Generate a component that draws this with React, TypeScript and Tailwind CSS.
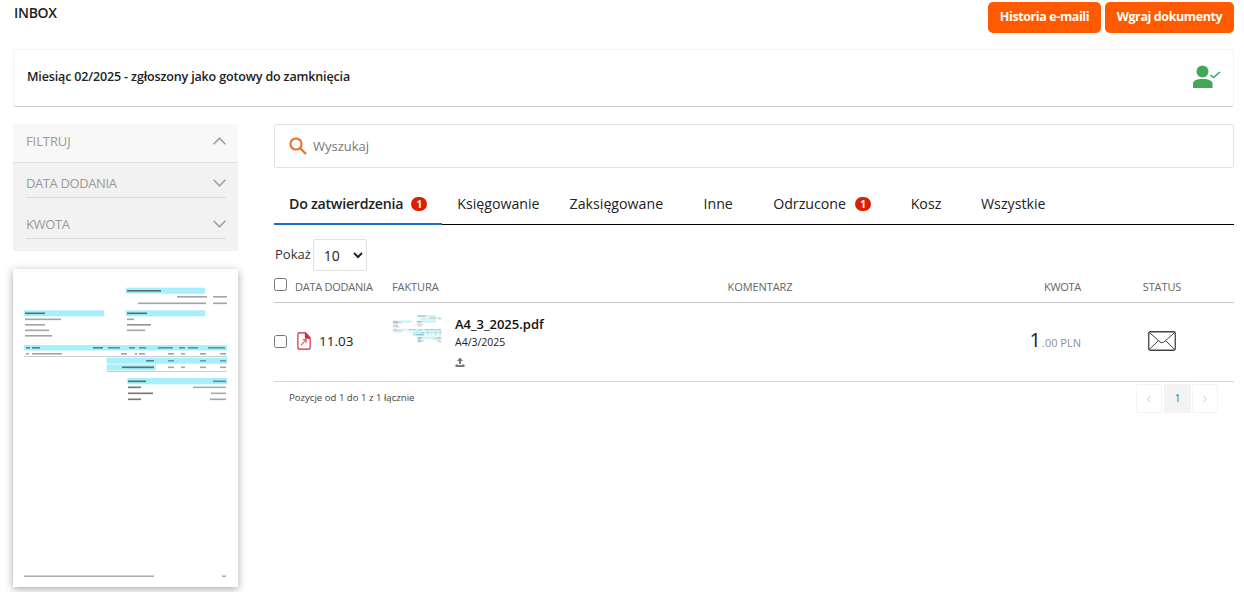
import React from "react";
import { ChevronLeft, ChevronRight } from "lucide-react";

const cyan = "#a5f0fc";

function DocPicture({ id, blur, fade }: { id: string; blur: number; fade: number }) {
  const bars = [
    [112.7, 18.7, 79.3, 6],
    [11, 41.3, 80, 6],
    [112.7, 41.3, 79.3, 6],
    [11, 76, 203, 5.5],
    [93.7, 88.7, 120.5, 6],
    [93.7, 95.5, 49, 6],
    [114.3, 109, 99.7, 6.3],
  ];
  const lines: number[][] = [
    [114, 21, 34, 1.6, 0.9], [164, 27, 30, 1.6, 0.6], [200, 27, 14, 1.6, 0.6], [125, 33.5, 68, 1.6, 0.6], [200, 33.5, 14, 1.6, 0.6],
    [12, 43.5, 20, 1.6, 0.9], [114, 43.5, 20, 1.6, 0.9], [12, 49.5, 36, 1.6, 0.6], [12, 55, 20, 1.6, 0.6], [12, 60.5, 24, 1.6, 0.6], [12, 66, 27, 1.6, 0.6],
    [114, 49.5, 7, 1.6, 0.6], [114, 55, 24, 1.6, 0.7], [114, 60.5, 18, 1.6, 0.6],
    [13, 78, 4, 1.6, 0.8], [19, 78, 8, 1.6, 0.8], [80, 78, 10, 1.6, 0.8], [95, 78, 12, 1.6, 0.7], [116, 78, 6, 1.6, 0.7], [126, 78, 7, 1.6, 0.7], [145, 78, 15, 1.6, 0.7], [166, 78, 6, 1.6, 0.7], [175, 78, 10, 1.6, 0.7], [195, 78, 17, 1.6, 0.7],
    [13, 84, 3, 1.6, 0.6], [19, 84, 30, 1.6, 0.6], [108, 84, 6, 1.6, 0.6], [122, 84, 2, 1.6, 0.7], [126, 84, 6, 1.6, 0.6], [155, 84, 6, 1.6, 0.6], [168, 84, 4, 1.6, 0.6], [187, 84, 6, 1.6, 0.6], [207, 84, 6, 1.6, 0.6],
    [133, 91, 8, 1.6, 0.8], [155, 91, 6, 1.6, 0.6], [187, 91, 6, 1.6, 0.6], [207, 91, 6, 1.6, 0.6],
    [109, 97.5, 32, 1.6, 0.9], [155, 97.5, 6, 1.6, 0.6], [168, 97.5, 4, 1.6, 0.6], [187, 97.5, 6, 1.6, 0.6], [207, 97.5, 6, 1.6, 0.6],
    [115, 111.5, 18, 1.6, 0.9], [200, 111.5, 13, 1.6, 0.7], [115, 117.5, 13, 1.6, 0.9], [180, 117.5, 33, 1.6, 0.55], [115, 123.5, 25, 1.6, 0.9], [198, 123.5, 15, 1.6, 0.55], [115, 129.5, 13, 1.6, 0.9], [197, 129.5, 16, 1.6, 0.6],
    [11, 306.5, 130, 1.4, 0.6], [209, 306.5, 4, 1.4, 0.6],
  ];
  return (
    <svg viewBox="0 0 225 318" className="block w-full h-full">
      <defs>
        <filter id={id} x="-5%" y="-5%" width="110%" height="110%">
          <feGaussianBlur stdDeviation={blur} />
        </filter>
      </defs>
      <g filter={`url(#${id})`}>
        {bars.map((b, i) => (
          <rect key={i} x={b[0]} y={b[1]} width={b[2]} height={b[3]} fill={cyan} />
        ))}
        <rect x="11" y="87" width="203" height="1" fill="#ccc" />
        <rect x="93.7" y="102" width="120" height="1" fill="#ccc" />
        {lines.map((l, i) => (
          <rect key={i} x={l[0]} y={l[1]} width={l[2]} height={l[3]} fill="#333" opacity={l[4] * fade} />
        ))}
      </g>
    </svg>
  );
}

function Chevron({ up }: { up?: boolean }) {
  return (
    <svg width="13" height="8" viewBox="0 0 13 8" aria-hidden="true" className="mt-[5px] shrink-0">
      <path d={up ? "M0.6 7.3 L6.5 1.2 L12.4 7.3" : "M0.6 0.7 L6.5 6.8 L12.4 0.7"} fill="none" stroke="#a0a0a0" strokeWidth="1.6" />
    </svg>
  );
}

function Badge({ gap }: { gap: string }) {
  return (
    <span className={`${gap} inline-flex h-[14px] w-[16px] items-center justify-center rounded-full bg-[#dc1f00] text-[10px] font-bold leading-none text-white`}>
      1
    </span>
  );
}

function Tab({ label, badge, active }: { label: string; badge?: boolean; active?: boolean }) {
  return (
    <div
      className={`flex h-[41px] min-w-[80px] items-center justify-center px-[15px] text-[14.2px] text-[#222] ${
        active ? "border-b-[2px] border-[#1a6fc4] font-semibold tracking-[-0.25px]" : "pb-[2px]"
      }`}
    >
      <span>{label}</span>
      {badge && <Badge gap={active ? "ml-[8px]" : "ml-[9px]"} />}
    </div>
  );
}

function FilterRow({ label, mt }: { label: string; mt: string }) {
  return (
    <div className={`ml-[13px] mr-[12px] flex h-[24px] items-start justify-between border-b border-[#dcdcdc] ${mt}`}>
      <span className="text-[13px] leading-[18px] tracking-[-0.4px] text-[#9a9a9a]">{label}</span>
      <Chevron />
    </div>
  );
}

const gridCols = "grid grid-cols-[21px_97px_250px_236px_212px_144px]";

export default function App() {
  return (
    <div className="h-[592px] overflow-hidden bg-white pl-[13px] pr-[10px] font-['Open_Sans',sans-serif] text-[#222]">
      <header className="flex h-[49px] items-start justify-between">
        <h1 className="pl-[1px] pt-[4px] text-[14px] font-semibold leading-[18px] tracking-[-0.3px] text-[#222]">INBOX</h1>
        <div className="mt-[2px] flex gap-[4px]">
          <button className="h-[31px] w-[113px] rounded-[5px] bg-[#ff5a00] text-[12.5px] font-bold tracking-[-0.4px] text-white">Historia e-maili</button>
          <button className="h-[31px] w-[129px] rounded-[5px] bg-[#ff5a00] text-[12.5px] font-bold tracking-[-0.4px] text-white">Wgraj dokumenty</button>
        </div>
      </header>

      <section className="flex h-[58px] items-center justify-between rounded-[3px] border border-[#f4f4f4] border-b-[#c8c8c8] pb-[2px] pl-[13px] pr-[12px]">
        <span className="text-[12.5px] font-semibold tracking-[-0.15px]">Miesiąc 02/2025 - zgłoszony jako gotowy do zamknięcia</span>
        <svg width="28" height="24" viewBox="0 0 28 24" aria-hidden="true">
          <circle cx="9.5" cy="6.5" r="6" fill="#43a855" />
          <path d="M0 23 V19 C0 15.5 3 14 9.5 14 C16 14 19.5 15.5 19.5 19 V23 Z" fill="#43a855" />
          <path d="M17.5 10 L20.5 12.5 L27 7" fill="none" stroke="#2fa56c" strokeWidth="1.6" />
        </svg>
      </section>

      <div className="mt-[17px] flex items-start">
        <aside className="w-[225px] shrink-0">
          <div className="h-[127px] bg-[#f2f2f2]">
            <div className="flex h-[39px] items-start justify-between border-b border-[#e0e0e0] bg-[#f8f8f8] pl-[13px] pr-[12px] pt-[8px]">
              <span className="text-[13px] leading-[18px] tracking-[-0.1px] text-[#9a9a9a]">FILTRUJ</span>
              <Chevron up />
            </div>
            <FilterRow label="DATA DODANIA" mt="mt-[11px]" />
            <FilterRow label="KWOTA" mt="mt-[17px]" />
          </div>
          <div className="mt-[18px] h-[318px] bg-white shadow-[0_2px_8px_rgba(0,0,0,0.35)]">
            <DocPicture id="doc-large" blur={0.7} fade={0.75} />
          </div>
        </aside>

        <main className="ml-[36px] min-w-0 flex-1">
          <div className="flex h-[44px] items-center rounded-[2px] border border-[#e2e2e2] pl-[14px]">
            <svg width="18" height="18" viewBox="0 0 18 18" aria-hidden="true">
              <circle cx="7" cy="7" r="5.6" fill="none" stroke="#f26a21" strokeWidth="2" />
              <path d="M11 11 L17 17" stroke="#f26a21" strokeWidth="2.2" />
            </svg>
            <span className="ml-[6px] pt-[1px] text-[13px] text-[#777]">Wyszukaj</span>
          </div>

          <nav className="mt-[16px] flex h-[41px] border-b border-black">
            <Tab label="Do zatwierdzenia" badge active />
            <Tab label="Księgowanie" />
            <Tab label="Zaksięgowane" />
            <Tab label="Inne" />
            <Tab label="Odrzucone" badge />
            <Tab label="Kosz" />
            <Tab label="Wszystkie" />
          </nav>

          <div className="mt-[14px] flex h-[32px] items-center">
            <span className="ml-[1px] text-[13px] text-[#333]">Pokaż</span>
            <select className="ml-[2px] h-[32px] w-[54px] rounded-[2px] border border-[#e0e0e0] bg-white pl-[6px] text-[14px] text-[#222]" defaultValue="10">
              <option value="10">10</option>
            </select>
          </div>

          <div className={`${gridCols} h-[32px] items-center border-b border-[#c9c9c9] text-[11px] text-[#666]`}>
            <input type="checkbox" className="-mt-[5px] m-0 h-[13px] w-[13px]" />
            <span className="pt-[2px] tracking-[-0.25px]">DATA DODANIA</span>
            <span className="pt-[2px] tracking-[-0.1px]">FAKTURA</span>
            <span className="pt-[2px] text-center tracking-[-0.1px]">KOMENTARZ</span>
            <span className="pt-[2px] pr-[9px] text-right tracking-[-0.3px]">KWOTA</span>
            <span className="pt-[2px] text-center tracking-[-0.1px]">STATUS</span>
          </div>

          <div className={`${gridCols} h-[79px] items-center border-b border-[#d6d6d6]`}>
            <input type="checkbox" className="-mt-[2px] m-0 h-[13px] w-[13px]" />
            <div className="-mt-[2px] flex items-center gap-[8px] pl-[2px]">
              <svg width="14" height="18" viewBox="0 0 16 19" preserveAspectRatio="none" aria-hidden="true">
                <path d="M1 2 C1 1.3 1.5 1 2 1 H10 L15 6 V17 C15 17.6 14.5 18 14 18 H2 C1.4 18 1 17.6 1 17 Z" fill="none" stroke="#d3223c" strokeWidth="1.3" />
                <path d="M9.5 1 V6.5 H15" fill="#d3223c" stroke="#d3223c" strokeWidth="1" />
                <path d="M4.5 14 L10.5 8 M6.5 8 H10.5 V12" fill="none" stroke="#e0566c" strokeWidth="1.2" />
              </svg>
              <span className="text-[13.5px] text-[#222]">11.03</span>
            </div>
            <div className="flex h-[78px] items-start overflow-hidden">
              <div className="-ml-[2px] mt-[8px] h-[76px] w-[54px] shrink-0">
                <DocPicture id="doc-small" blur={0.7} fade={1} />
              </div>
              <div className="ml-[11px] pt-[14px]">
                <div className="text-[13px] font-semibold leading-[15px] text-[#111]">A4_3_2025.pdf</div>
                <div className="mt-[3px] text-[10.5px] leading-[14px] text-[#222]">A4/3/2025</div>
                <svg className="mt-[8px]" width="10" height="10" viewBox="0 0 10 10" aria-hidden="true">
                  <path d="M5 0.5 L8 4 H6 V7 H4 V4 H2 Z" fill="#777" />
                  <path d="M0.5 7.5 H3 V8 H7 V7.5 H9.5 V10 H0.5 Z" fill="#777" />
                </svg>
              </div>
            </div>
            <div />
            <div className="-mt-[2px] flex items-baseline justify-end pr-[9px]">
              <span className="text-[20px] leading-none text-[#222]">1</span>
              <span className="ml-[1px] text-[11px] text-[#8a8f98]">.00 PLN</span>
            </div>
            <div className="-mt-[3px] flex justify-center">
              <svg width="28" height="20" viewBox="0 0 28 20" aria-hidden="true">
                <rect x="0.75" y="0.75" width="26.5" height="18.5" rx="1.5" fill="none" stroke="#444" strokeWidth="1.3" />
                <path d="M1 1.2 L12 11 Q14 12.5 16 11 L27 1.2 M1 18.8 L10.5 9.5 M27 18.8 L17.5 9.5" fill="none" stroke="#444" strokeWidth="1" />
              </svg>
            </div>
          </div>

          <div className="flex items-start justify-between pr-[16px] pt-[2px]">
            <span className="ml-[15px] mt-[7px] text-[9.6px] leading-[14px] text-[#444]">Pozycje od 1 do 1 z 1 łącznie</span>
            <div className="flex">
              <span className="flex h-[29px] w-[26px] items-center justify-center rounded-[2px] border border-[#f4f4f4] text-[#ccc]"><ChevronLeft size={12} /></span>
              <span className="ml-[2px] flex h-[29px] w-[27px] items-center justify-center rounded-[2px] bg-[#f3f3f3] text-[10px] text-[#1a7f8c]">1</span>
              <span className="ml-[1px] flex h-[29px] w-[26px] items-center justify-center rounded-[2px] border border-[#f4f4f4] text-[#ccc]"><ChevronRight size={12} /></span>
            </div>
          </div>
        </main>
      </div>
    </div>
  );
}
